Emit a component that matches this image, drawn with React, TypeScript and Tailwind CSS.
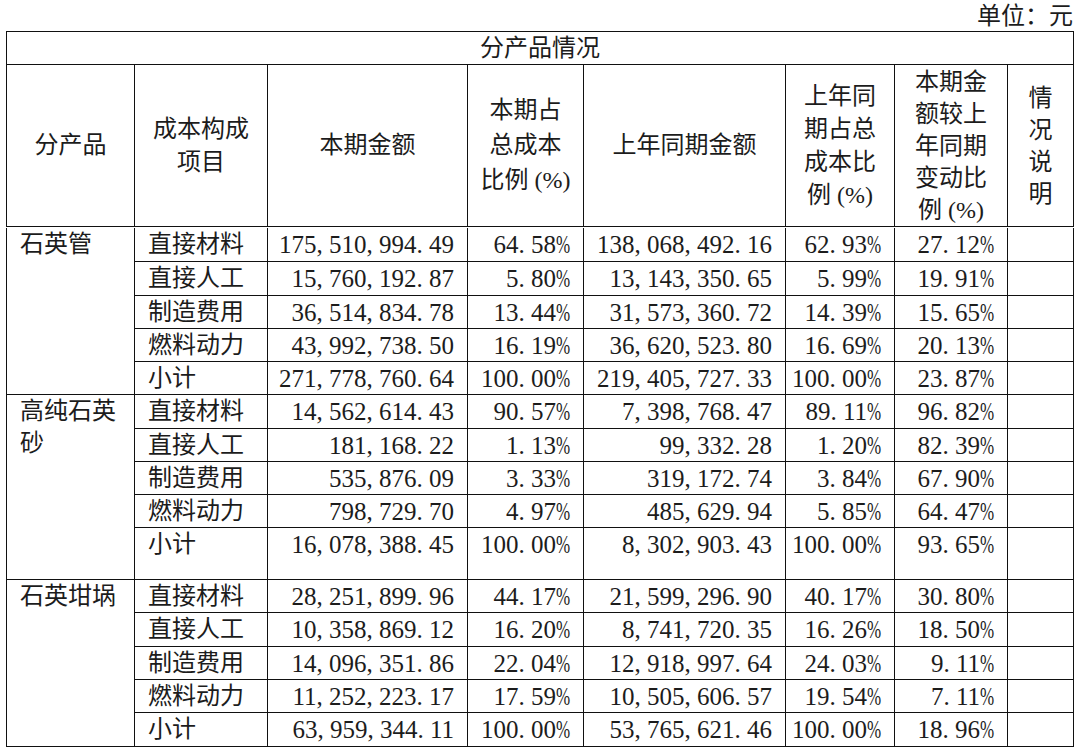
const font = "font-['Liberation_Serif','Noto_Sans_CJK_SC',serif]";

type Row = [string, string, string, string, string, string];

const groups: { name: string; lines: string[]; rows: Row[] }[] = [
  {
    name: "石英管",
    lines: ["石英管"],
    rows: [
      ["直接材料", "175,510,994.49", "64.58%", "138,068,492.16", "62.93%", "27.12%"],
      ["直接人工", "15,760,192.87", "5.80%", "13,143,350.65", "5.99%", "19.91%"],
      ["制造费用", "36,514,834.78", "13.44%", "31,573,360.72", "14.39%", "15.65%"],
      ["燃料动力", "43,992,738.50", "16.19%", "36,620,523.80", "16.69%", "20.13%"],
      ["小计", "271,778,760.64", "100.00%", "219,405,727.33", "100.00%", "23.87%"],
    ],
  },
  {
    name: "高纯石英砂",
    lines: ["高纯石英", "砂"],
    rows: [
      ["直接材料", "14,562,614.43", "90.57%", "7,398,768.47", "89.11%", "96.82%"],
      ["直接人工", "181,168.22", "1.13%", "99,332.28", "1.20%", "82.39%"],
      ["制造费用", "535,876.09", "3.33%", "319,172.74", "3.84%", "67.90%"],
      ["燃料动力", "798,729.70", "4.97%", "485,629.94", "5.85%", "64.47%"],
      ["小计", "16,078,388.45", "100.00%", "8,302,903.43", "100.00%", "93.65%"],
    ],
  },
  {
    name: "石英坩埚",
    lines: ["石英坩埚"],
    rows: [
      ["直接材料", "28,251,899.96", "44.17%", "21,599,296.90", "40.17%", "30.80%"],
      ["直接人工", "10,358,869.12", "16.20%", "8,741,720.35", "16.26%", "18.50%"],
      ["制造费用", "14,096,351.86", "22.04%", "12,918,997.64", "24.03%", "9.11%"],
      ["燃料动力", "11,252,223.17", "17.59%", "10,505,606.57", "19.54%", "7.11%"],
      ["小计", "63,959,344.11", "100.00%", "53,765,621.46", "100.00%", "18.96%"],
    ],
  },
];

// row heights measured off the scan (without the 1px bottom rule)
const rowH = [
  ["h-[33px]", "h-[33px]", "h-[32px]", "h-[32px]", "h-[32px]"],
  ["h-[33px]", "h-[32px]", "h-[32px]", "h-[32px]", "h-[51px]"],
  ["h-[32px]", "h-[33px]", "h-[32px]", "h-[32px]", "h-[33px]"],
];

// punctuation in the source font sits in a half-width cell
const Num = ({ v }: { v: string }) => (
  <span className="text-[25px]">
    {v.split("").map((c, i) =>
      c === "," || c === "." ? (
        <span key={i} className="inline-block w-[0.5em] text-left leading-none">
          {c}
        </span>
      ) : c === "%" ? (
        <span key={i} className="inline-block w-[0.56em] text-left leading-none">
          <span className="inline-block scale-x-[0.68] origin-left">%</span>
        </span>
      ) : (
        <span key={i}>{c}</span>
      )
    )}
  </span>
);

const Cols = () => (
  <colgroup>
    <col className="w-[128px]" />
    <col className="w-[133px]" />
    <col className="w-[200px]" />
    <col className="w-[116px]" />
    <col className="w-[202px]" />
    <col className="w-[109px]" />
    <col className="w-[113px]" />
    <col className="w-[66px]" />
  </colgroup>
);

const Lines = ({ items, lh }: { items: string[]; lh: string }) => (
  <div className="h-[161px] flex flex-col justify-center items-center">
    {items.map((t) => (
      <div key={t} className={`${lh} whitespace-pre`}>
        {t}
      </div>
    ))}
  </div>
);

const th = "border-r border-b border-[#111] p-0 font-normal align-top";
const td = "border-r border-b border-[#111] p-0 align-top";

export default function App() {
  return (
    <div className={`w-[1080px] h-[753px] bg-white text-[#1c1c1c] text-[24px] ${font}`}>
      <div className="h-[31px] flex justify-end items-end pr-[7px] leading-[30px]">单位：元</div>

      <table className="ml-[6px] w-[1067px] table-fixed border-separate border-spacing-0 border-l border-t border-[#111]">
        <Cols />
        <thead>
          <tr>
            <th colSpan={8} className={th}>
              <div className="h-[32px] leading-[32px] text-center">分产品情况</div>
            </th>
          </tr>
          <tr>
            <th className={th}>
              <Lines items={["分产品"]} lh="leading-[33px]" />
            </th>
            <th className={th}>
              <Lines items={["成本构成", "项目"]} lh="leading-[33px]" />
            </th>
            <th className={th}>
              <Lines items={["本期金额"]} lh="leading-[33px]" />
            </th>
            <th className={th}>
              <Lines items={["本期占", "总成本", "比例 (%)"]} lh="leading-[35px]" />
            </th>
            <th className={th}>
              <Lines items={["上年同期金额"]} lh="leading-[33px]" />
            </th>
            <th className={th}>
              <Lines items={["上年同", "期占总", "成本比", "例 (%)"]} lh="leading-[33px]" />
            </th>
            <th className={th}>
              <Lines items={["本期金", "额较上", "年同期", "变动比", "例 (%)"]} lh="leading-[32px]" />
            </th>
            <th className={th}>
              <Lines items={["情", "况", "说", "明"]} lh="leading-[32px]" />
            </th>
          </tr>
        </thead>
      </table>

      <table className="ml-[6px] mt-[1px] w-[1067px] table-fixed border-separate border-spacing-0 border-l border-[#111]">
        <Cols />
        <tbody>
          {groups.map((g, gi) =>
            g.rows.map((r, i) => (
              <tr key={g.name + i}>
                {i === 0 && (
                  <td rowSpan={g.rows.length} className={`${td} pl-[13px]`}>
                    {g.lines.map((l) => (
                      <div key={l} className="leading-[31px] pt-[1px]">
                        {l}
                      </div>
                    ))}
                  </td>
                )}
                <td className={td}>
                  <div className={`${rowH[gi][i]} leading-[33px] pl-[13px] whitespace-nowrap`}>{r[0]}</div>
                </td>
                {r.slice(1).map((v, j) => (
                  <td key={j} className={td}>
                    <div className={`${rowH[gi][i]} leading-[33px] text-right pr-[13px] whitespace-nowrap`}>
                      <Num v={v} />
                    </div>
                  </td>
                ))}
                <td className={td}>
                  <div className={rowH[gi][i]}></div>
                </td>
              </tr>
            ))
          )}
        </tbody>
      </table>
    </div>
  );
}
